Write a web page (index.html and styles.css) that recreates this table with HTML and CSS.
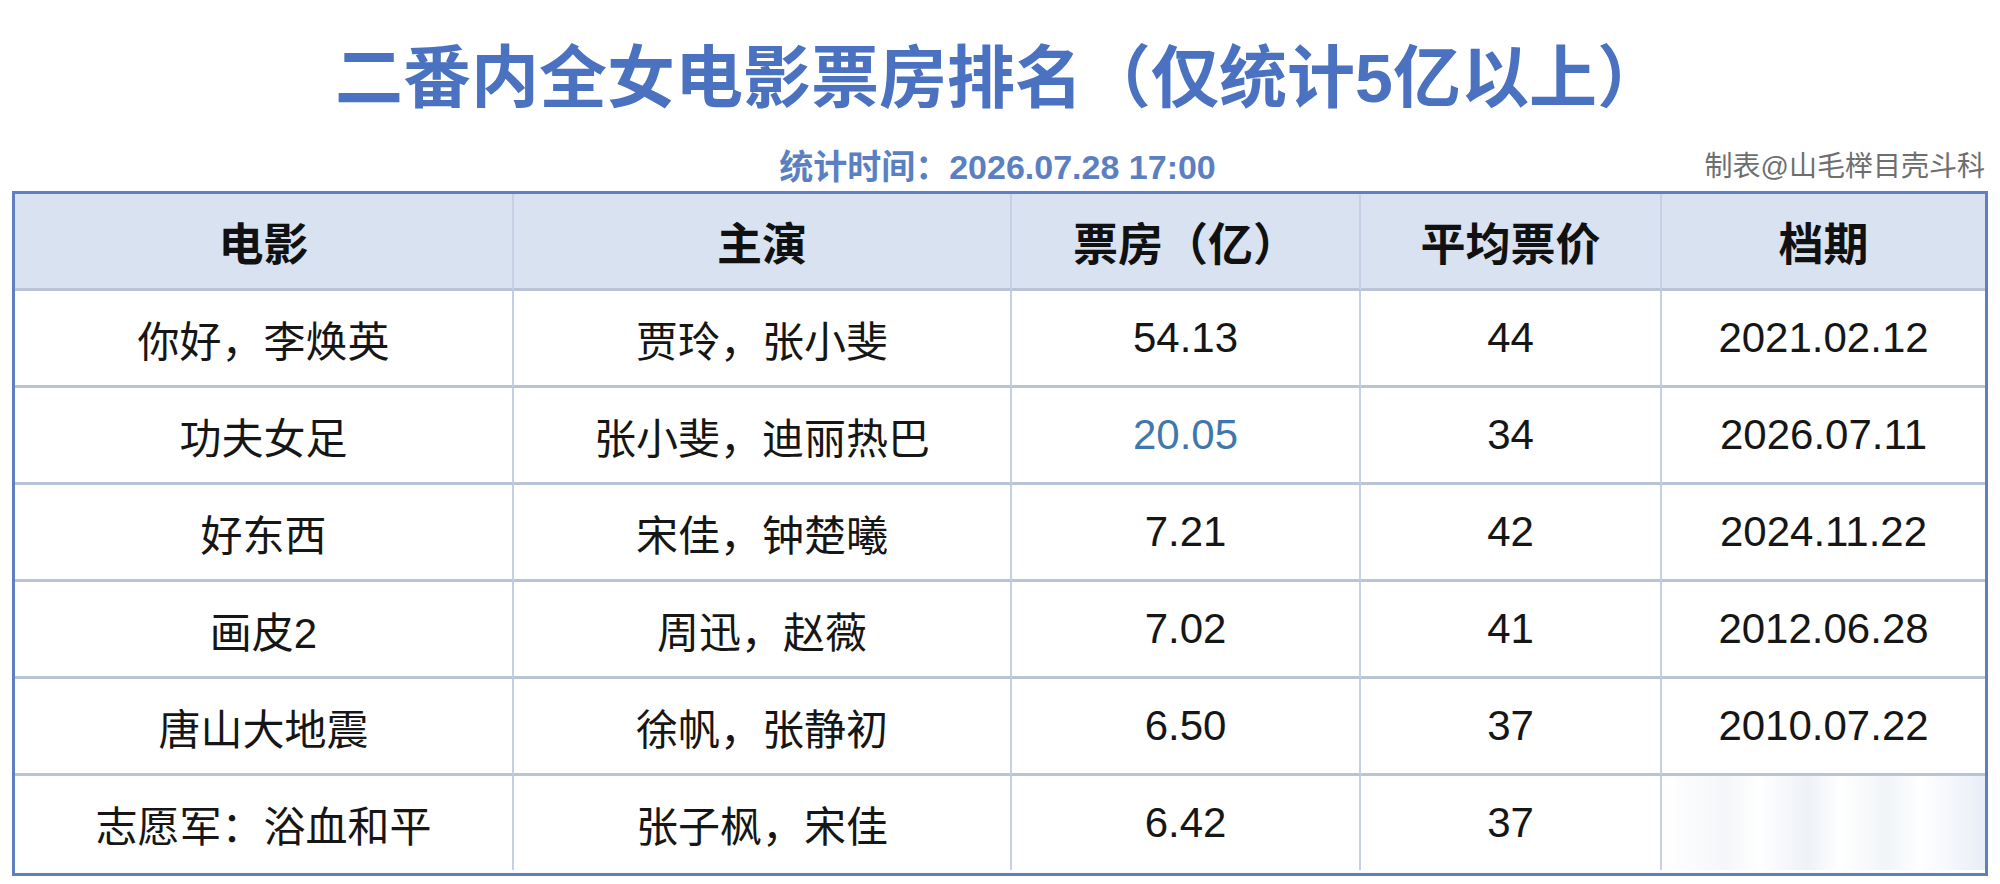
FILE: index.html
```html
<!DOCTYPE html>
<html lang="zh-CN">
<head>
<meta charset="utf-8">
<title>二番内全女电影票房排名</title>
<link rel="stylesheet" href="styles.css">
</head>
<body>
<div class="page">
  <h1 class="title">二番内全女电影票房排名（仅统计5亿以上）</h1>
  <div class="meta">
    <span></span>
    <span class="stat-time">统计时间：2026.07.28 17:00</span>
    <span class="credit">制表@山毛榉目壳斗科</span>
  </div>
  <div class="grid">
    <div class="cell head">电影</div>
    <div class="cell head">主演</div>
    <div class="cell head">票房（亿）</div>
    <div class="cell head">平均票价</div>
    <div class="cell head last-col">档期</div>

    <div class="cell">你好，李焕英</div>
    <div class="cell">贾玲，张小斐</div>
    <div class="cell">54.13</div>
    <div class="cell">44</div>
    <div class="cell last-col">2021.02.12</div>

    <div class="cell">功夫女足</div>
    <div class="cell">张小斐，迪丽热巴</div>
    <div class="cell hl">20.05</div>
    <div class="cell">34</div>
    <div class="cell last-col">2026.07.11</div>

    <div class="cell">好东西</div>
    <div class="cell">宋佳，钟楚曦</div>
    <div class="cell">7.21</div>
    <div class="cell">42</div>
    <div class="cell last-col">2024.11.22</div>

    <div class="cell">画皮2</div>
    <div class="cell">周迅，赵薇</div>
    <div class="cell">7.02</div>
    <div class="cell">41</div>
    <div class="cell last-col">2012.06.28</div>

    <div class="cell">唐山大地震</div>
    <div class="cell">徐帆，张静初</div>
    <div class="cell">6.50</div>
    <div class="cell">37</div>
    <div class="cell last-col">2010.07.22</div>

    <div class="cell last-row">志愿军：浴血和平</div>
    <div class="cell last-row">张子枫，宋佳</div>
    <div class="cell last-row">6.42</div>
    <div class="cell last-row">37</div>
    <div class="cell last-row last-col blur"></div>
  </div>
</div>
</body>
</html>
```
FILE: styles.css
```css
html, body {
  margin: 0;
  padding: 0;
  background: #ffffff;
}
.page {
  width: 2000px;
  height: 884px;
  overflow: hidden;
  font-family: "Liberation Sans", "Noto Sans CJK SC", sans-serif;
  color: #1c1c1c;
}
.title {
  margin: 0;
  padding-top: 41px;
  height: 74px;
  line-height: 74px;
  text-align: center;
  font-size: 68px;
  font-weight: 700;
  color: #4a72c0;
  font-family: "Liberation Sans", "Noto Sans CJK SC", sans-serif;
}
.meta {
  margin-top: 32px;
  height: 40px;
  display: grid;
  grid-template-columns: 1fr auto 1fr;
  align-items: center;
  padding-right: 15px;
}
.stat-time {
  font-size: 34px;
  font-weight: 700;
  color: #5b80c2;
  line-height: 40px;
  padding-left: 10px;
}
.credit {
  justify-self: end;
  font-size: 28px;
  color: #6e6e6e;
  line-height: 40px;
}
.grid {
  margin-top: 4px;
  margin-left: 12px;
  width: 1976px;
  box-sizing: border-box;
  border: 3px solid #5f7fbe;
  display: grid;
  grid-template-columns: 499px 498px 349px 301px 323px;
  grid-auto-rows: 97px;
}
.cell {
  box-sizing: border-box;
  border-right: 2px solid #c4d1e5;
  border-bottom: 3px solid #b9c5d6;
  display: flex;
  align-items: center;
  justify-content: center;
  font-size: 42px;
  color: #161616;
}
.cell.last-col {
  border-right: none;
}
.cell.last-row {
  border-bottom: none;
  height: 94px;
}
.head {
  background: #d8e2f0;
  font-weight: 700;
  font-size: 45px;
  color: #111111;
}
.hl {
  color: #3f78ae;
}
.blur {
  background: linear-gradient(90deg, #ffffff 0%, #f4f6f9 20%, #ffffff 30%, #eef1f6 45%, #ffffff 55%, #f1f4f8 70%, #ffffff 80%, #e8eef7 100%);
}
```
